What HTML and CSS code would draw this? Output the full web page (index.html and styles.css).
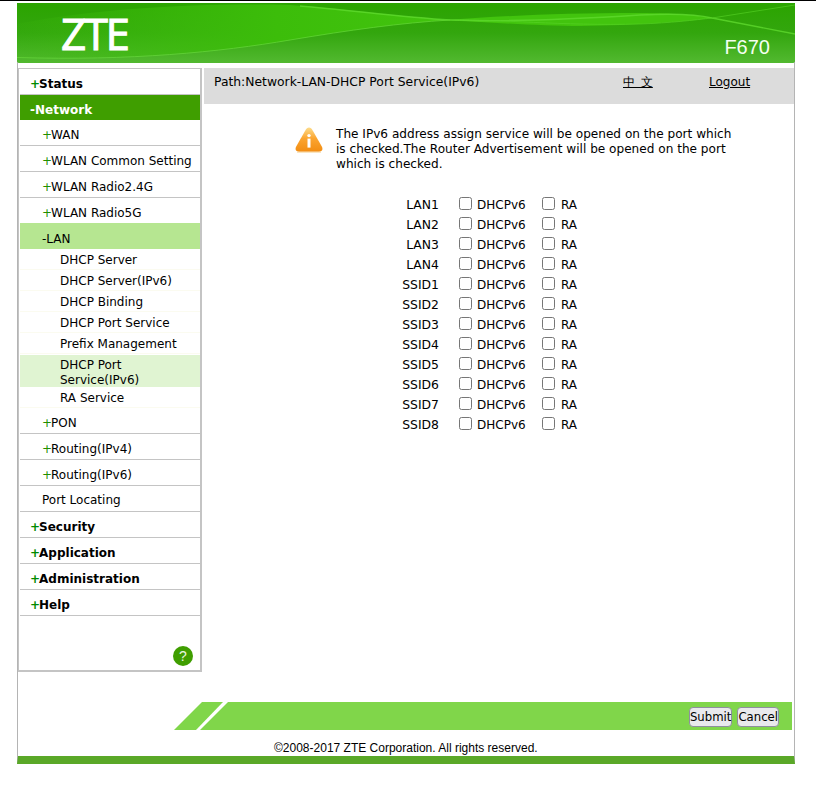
FILE: index.html
```html
<!DOCTYPE html>
<html lang="en">
<head>
<meta charset="utf-8">
<title>F670</title>
<link rel="stylesheet" href="styles.css">
</head>
<body>
<div class="page">
  <header class="banner">
    <svg class="banner-art" viewBox="17 3 778 60" preserveAspectRatio="none" aria-hidden="true">
      <defs>
        <linearGradient id="bg" x1="0" y1="0" x2="0" y2="1">
          <stop offset="0" stop-color="#2ba400"/>
          <stop offset="0.5" stop-color="#33a60e"/>
          <stop offset="1" stop-color="#52b930"/>
        </linearGradient>
        <linearGradient id="glow" x1="0" y1="0" x2="1" y2="0">
          <stop offset="0" stop-color="#3dbb0c" stop-opacity="0.1"/>
          <stop offset="0.6" stop-color="#3cbd0a" stop-opacity="1"/>
          <stop offset="1" stop-color="#42c40e" stop-opacity="1"/>
        </linearGradient>
      </defs>
      <rect x="17" y="3" width="778" height="60" fill="url(#bg)"/>
      <path d="M17 24 C100 8 200 3 290 5 C340 8 400 17 450 20 C400 23 350 30 290 40 C220 52 130 60 17 57 Z" fill="url(#glow)"/>
      <path d="M450 20 C500 16 560 13 640 13 C680 13 700 16 712 18 C680 22 640 25 580 26 C540 26 480 22 450 20 Z" fill="#42c40e"/>
      <path d="M17 57.5 C130 61 220 52 290 40 C350 30 400 23 450 20" fill="none" stroke="#66d83a" stroke-width="1" opacity="0.7"/>
      <path d="M300 6 C350 10 400 17 450 20 C500 22 560 20 640 15 C680 13 700 15 712 18 L795 34" fill="none" stroke="#62dc30" stroke-width="1.4" opacity="0.75"/>
      <path d="M450 20 C500 19 560 26 640 24 C670 23 695 20 712 18 L795 5" fill="none" stroke="#58d428" stroke-width="1" opacity="0.6"/>
    </svg>
    <span class="logo">ZTE</span>
    <span class="model">F670</span>
  </header>
  <div class="main">
    <nav class="sidebar">
      <a class="l1"><b class="plus">+</b>Status</a>
      <a class="l1 open">-Network</a>
      <a class="l2"><b class="plus">+</b>WAN</a>
      <a class="l2"><b class="plus">+</b>WLAN Common Setting</a>
      <a class="l2"><b class="plus">+</b>WLAN Radio2.4G</a>
      <a class="l2"><b class="plus">+</b>WLAN Radio5G</a>
      <a class="l2 open">-LAN</a>
      <a class="l3">DHCP Server</a>
      <a class="l3">DHCP Server(IPv6)</a>
      <a class="l3">DHCP Binding</a>
      <a class="l3">DHCP Port Service</a>
      <a class="l3">Prefix Management</a>
      <a class="l3 current">DHCP Port Service(IPv6)</a>
      <a class="l3 last">RA Service</a>
      <a class="l2"><b class="plus">+</b>PON</a>
      <a class="l2"><b class="plus">+</b>Routing(IPv4)</a>
      <a class="l2"><b class="plus">+</b>Routing(IPv6)</a>
      <a class="l2 plain">Port Locating</a>
      <a class="l1"><b class="plus">+</b>Security</a>
      <a class="l1"><b class="plus">+</b>Application</a>
      <a class="l1"><b class="plus">+</b>Administration</a>
      <a class="l1"><b class="plus">+</b>Help</a>
      <div class="help-wrap"><span class="help">?</span></div>
    </nav>
    <section class="content">
      <div class="pathbar">
        <span class="path">Path:Network-LAN-DHCP Port Service(IPv6)</span>
        <a class="lang">中&nbsp;文</a>
        <a class="logout">Logout</a>
      </div>
      <div class="notice">
        <svg class="warn" viewBox="0 0 30 28" aria-hidden="true">
          <defs>
            <linearGradient id="w" x1="0" y1="0" x2="0" y2="1">
              <stop offset="0" stop-color="#fddc8a"/>
              <stop offset="0.45" stop-color="#fba531"/>
              <stop offset="1" stop-color="#f28d12"/>
            </linearGradient>
          </defs>
          <path d="M15 1.5 C16.6 1.5 17.6 2.6 18.4 4 L27.8 20.6 C29.3 23.4 28 25.8 25 25.8 L5 25.8 C2 25.8 0.7 23.4 2.2 20.6 L11.6 4 C12.4 2.6 13.4 1.5 15 1.5 Z" fill="url(#w)"/>
          <path d="M3 26.2 L27 26.2" stroke="#f7d9a6" stroke-width="1"/>
          <circle cx="15" cy="9.6" r="1.7" fill="#fff"/>
          <rect x="13.5" y="12.6" width="3" height="9" fill="#fff"/>
        </svg>
        <p>The IPv6 address assign service will be opened on the port which is checked.The Router Advertisement will be opened on the port which is checked.</p>
      </div>
      <div class="ports">
        <div class="port"><span class="name">LAN1</span><label class="dhcp"><input type="checkbox">DHCPv6</label><label class="ra"><input type="checkbox">RA</label></div>
        <div class="port"><span class="name">LAN2</span><label class="dhcp"><input type="checkbox">DHCPv6</label><label class="ra"><input type="checkbox">RA</label></div>
        <div class="port"><span class="name">LAN3</span><label class="dhcp"><input type="checkbox">DHCPv6</label><label class="ra"><input type="checkbox">RA</label></div>
        <div class="port"><span class="name">LAN4</span><label class="dhcp"><input type="checkbox">DHCPv6</label><label class="ra"><input type="checkbox">RA</label></div>
        <div class="port"><span class="name">SSID1</span><label class="dhcp"><input type="checkbox">DHCPv6</label><label class="ra"><input type="checkbox">RA</label></div>
        <div class="port"><span class="name">SSID2</span><label class="dhcp"><input type="checkbox">DHCPv6</label><label class="ra"><input type="checkbox">RA</label></div>
        <div class="port"><span class="name">SSID3</span><label class="dhcp"><input type="checkbox">DHCPv6</label><label class="ra"><input type="checkbox">RA</label></div>
        <div class="port"><span class="name">SSID4</span><label class="dhcp"><input type="checkbox">DHCPv6</label><label class="ra"><input type="checkbox">RA</label></div>
        <div class="port"><span class="name">SSID5</span><label class="dhcp"><input type="checkbox">DHCPv6</label><label class="ra"><input type="checkbox">RA</label></div>
        <div class="port"><span class="name">SSID6</span><label class="dhcp"><input type="checkbox">DHCPv6</label><label class="ra"><input type="checkbox">RA</label></div>
        <div class="port"><span class="name">SSID7</span><label class="dhcp"><input type="checkbox">DHCPv6</label><label class="ra"><input type="checkbox">RA</label></div>
        <div class="port"><span class="name">SSID8</span><label class="dhcp"><input type="checkbox">DHCPv6</label><label class="ra"><input type="checkbox">RA</label></div>
      </div>
    </section>
  </div>
  <div class="actions">
    <div class="action-bar">
      <span class="stripe"></span>
      <button type="button">Submit</button>
      <button type="button">Cancel</button>
    </div>
  </div>
  <footer class="copyright">©2008-2017 ZTE Corporation. All rights reserved.</footer>
</div>
</body>
</html>
```

FILE: styles.css
```css
* { box-sizing: border-box; }
html, body { margin: 0; padding: 0; background: #fff; }
body {
  font-family: "DejaVu Sans", sans-serif;
  font-size: 12px;
  color: #000;
  border-top: 1px solid #000;
  height: 805px;
  overflow: hidden;
}
.page {
  width: 778px;
  margin: 2px 0 0 17px;
  height: 761px;
  display: flex;
  flex-direction: column;
  border-bottom: 8px solid #5aa828;
  border-right: 1px solid #b4b4b4;
  border-left: 1px solid #b4b4b4;
}
.banner {
  position: relative;
  height: 60px;
  margin: 0 -1px;
  flex: none;
  overflow: hidden;
  border-radius: 0 0 3px 3px;
  background: #35ad0c;
}
.banner-art { position: absolute; inset: 0; width: 100%; height: 100%; }
.logo {
  position: absolute;
  left: 44px;
  top: 6px;
  font: 400 44px/48px "Open Sans", sans-serif;
  color: #fff;
  letter-spacing: -2.4px;
  -webkit-text-stroke: 1px #fff;
}
.model {
  position: absolute;
  right: 25px;
  top: 32px;
  font: 400 20px/24px "Liberation Sans", sans-serif;
  color: #f4fff0;
}
.main {
  display: flex;
  margin-top: 5px;
  height: 604px;
  flex: none;
}
.sidebar {
  width: 184px;
  flex: none;
  display: flex;
  flex-direction: column;
  border: 2px solid #c4c4c4;
  border-left-width: 1px;
  border-top-width: 1px;
  padding-left: 1px;
  margin-right: 2px;
}
.sidebar a { display: block; }
.l1 {
  height: 26px;
  line-height: 31px;
  padding-left: 10px;
  font-weight: 700;
  border-bottom: 1px solid #c4c4c4;
}
.l1.open {
  height: 25px;
  background: #3f9e00;
  color: #fff;
  border-bottom: 0;
}
.l2 {
  height: 26px;
  line-height: 31px;
  padding-left: 22px;
  border-bottom: 1px solid #c4c4c4;
}
.l2.plain { line-height: 29px; }
.l2.open { background: #b6e691; border-bottom: 0; margin-top: -1px; line-height: 33px; }
.l3 {
  padding: 4px 12px 0 40px;
  line-height: 15px;
  height: 21px;
  border-bottom: 1px solid #fbfbf0;
}
.l3.current {
  height: 32px;
  margin-top: 1px;
  padding: 3px 40px 0 40px;
  background: #e0f4d2;
  border-bottom: 0;
}
.plus { color: #008a00; font-weight: 700; letter-spacing: -1px; }
.l2 .plus { font-weight: 400; color: #1f8f00; }
.help-wrap {
  flex: 1;
  display: flex;
  align-items: flex-end;
  justify-content: flex-end;
  padding: 0 7px 4px 0;
}
.help {
  width: 20px;
  height: 20px;
  border-radius: 50%;
  background: #3f9e00;
  color: #e8f5e0;
  text-align: center;
  font: 400 14px/20px "Liberation Sans", sans-serif;
}
.content { flex: 1; min-width: 0; }
.pathbar {
  height: 36px;
  background: #dcdcdc;
  display: flex;
  padding: 6px 0 0 10px;
  line-height: 16px;
}
.path { width: 409px; font-size: 12.35px; }
.lang { width: 86px; text-decoration: underline; word-spacing: 2px; }
.logout { text-decoration: underline; }
.notice {
  display: flex;
  margin: 22px 0 0 90px;
}
.warn { width: 30px; height: 28px; flex: none; margin-right: 12px; }
.notice p {
  margin: 0;
  width: 402px;
  padding-top: 1px;
  font-size: 12.1px;
  line-height: 15px;
}
.ports { margin-top: 23px; }
.port {
  display: flex;
  align-items: center;
  height: 20px;
  line-height: 20px;
}
.name { width: 235px; text-align: right; font-size: 12.4px; }
.dhcp { display: flex; align-items: center; width: 83px; margin-left: 20px; }
.ra { display: flex; align-items: center; }
.port input { margin: 0 5px 3px 0; width: 13px; height: 13px; }
.ra input { margin-right: 6px; }
.actions {
  display: flex;
  margin-top: 30px;
  height: 28px;
  flex: none;
  padding: 0 2px 0 156px;
}
.action-bar {
  position: relative;
  flex: 1;
  background: #80d64a;
  display: flex;
  justify-content: flex-end;
  align-items: center;
  gap: 5px;
  padding: 1px 13px 0 0;
  clip-path: polygon(28px 0, 100% 0, 100% 100%, 0 100%);
}
.stripe {
  position: absolute;
  left: 22px;
  top: 0;
  width: 32px;
  height: 100%;
  background: #fff;
  clip-path: polygon(27px 0, 32px 0, 4px 100%, 0 100%);
}
.action-bar button {
  height: 20px;
  padding: 0;
  font: 400 11.7px/16px "DejaVu Sans", sans-serif;
  border: 1px solid #8f8f9d;
  border-radius: 4px;
  background: #e9e9ed;
  color: #000;
}
.copyright {
  padding-left: 256px;
  margin-top: 11px;
  font: 400 12px/14px "Liberation Sans", sans-serif;
}
```
